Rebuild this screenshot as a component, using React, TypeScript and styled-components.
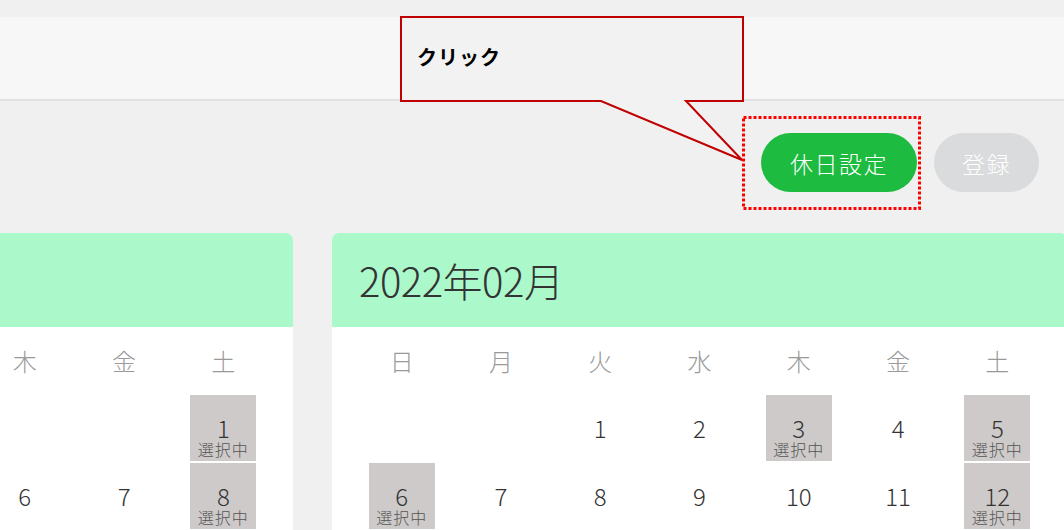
import React from 'react'
import styled, { createGlobalStyle } from 'styled-components'

const GlobalStyle = createGlobalStyle`
  html, body {
    margin: 0;
    padding: 0;
    background: #f0f0f0;
  }
  body {
    font-family: 'Noto Sans CJK JP', 'Noto Sans', sans-serif;
    overflow: hidden;
  }
`

type Month = {
  title: string
  firstWeekday: number
  days: number
  selected: number[]
}

const WEEKDAYS = ['日', '月', '火', '水', '木', '金', '土']

const MONTHS: Month[] = [
  { title: '2022年01月', firstWeekday: 6, days: 31, selected: [1, 8] },
  { title: '2022年02月', firstWeekday: 2, days: 28, selected: [3, 5, 6, 12] },
]

const buildCells = (month: Month) => {
  const cells: (number | null)[] = []
  for (let i = 0; i < month.firstWeekday; i++) cells.push(null)
  for (let d = 1; d <= month.days; d++) cells.push(d)
  return cells
}

const CalendarCard = (props: { month: Month }) => {
  const { month } = props
  return (
    <Card>
      <CardHeader>{month.title}</CardHeader>
      <WeekRow>
        {WEEKDAYS.map((w) => (
          <Weekday key={w}>{w}</Weekday>
        ))}
      </WeekRow>
      <DayGrid>
        {buildCells(month).map((day, index) => {
          const selected = day !== null && month.selected.includes(day)
          return (
            <DayCell key={index} $selected={selected}>
              {day !== null ? <DayNumber>{day}</DayNumber> : null}
              {selected ? <DayLabel>選択中</DayLabel> : null}
            </DayCell>
          )
        })}
      </DayGrid>
    </Card>
  )
}

const App = () => {
  return (
    <Page>
      <GlobalStyle />
      <TopBar />
      <Toolbar>
        <ActionButton $variant={'primary'}>休日設定</ActionButton>
        <ActionButton $variant={'disabled'}>登録</ActionButton>
      </Toolbar>
      <CalendarRow>
        {MONTHS.map((m) => (
          <CalendarCard key={m.title} month={m} />
        ))}
      </CalendarRow>

      <Callout>
        <svg width="346" height="146" viewBox="0 0 346 146">
          <path
            d="M1 1 H343 V85 H286 L342 144 L201 85 H1 Z"
            fill="#f2f2f2"
            stroke="#c00000"
            strokeWidth="2"
          />
        </svg>
        <CalloutText>クリック</CalloutText>
      </Callout>

      <HighlightFrame>
        <svg width="179" height="94" viewBox="0 0 179 94">
          <rect
            x="1.5"
            y="1.5"
            width="176"
            height="91"
            fill="none"
            stroke="#ff0000"
            strokeWidth="3"
            strokeDasharray="3 2"
          />
        </svg>
      </HighlightFrame>
    </Page>
  )
}

export default App

const Page = styled.div`
  position: relative;
  width: 1064px;
  height: 530px;
  overflow: hidden;
  display: flex;
  flex-direction: column;
  background: #f0f0f0;
`

const TopBar = styled.div`
  flex-shrink: 0;
  margin-top: 17px;
  height: 82px;
  background: #f7f7f7;
  border-bottom: 2px solid #e2e2e2;
`

const Toolbar = styled.div`
  flex-shrink: 0;
  display: flex;
  justify-content: flex-end;
  gap: 17px;
  padding: 32px 25px 0 0;
`

const ActionButton = styled.button<{ $variant: 'primary' | 'disabled' }>`
  height: 59px;
  border: none;
  border-radius: 30px;
  padding: ${(p) => (p.$variant === 'primary' ? '0 29px' : '0 28px')};
  background: ${(p) => (p.$variant === 'primary' ? '#1dbb3f' : '#d9dbdc')};
  color: #ffffff;
  font-family: 'Noto Sans CJK JP', 'Noto Sans', sans-serif;
  font-size: 23px;
  font-weight: 300;
  letter-spacing: 1.5px;
  cursor: pointer;
`

const CalendarRow = styled.div`
  flex-shrink: 0;
  display: flex;
  gap: 39px;
  margin-top: 41px;
  margin-left: -442px;
`

const Card = styled.div`
  flex-shrink: 0;
  width: 735px;
  height: 400px;
  background: #ffffff;
  border-radius: 7px 7px 0 0;
  overflow: hidden;
`

const CardHeader = styled.div`
  height: 94px;
  display: flex;
  align-items: center;
  padding-left: 27px;
  background: #abf8cb;
  color: #333333;
  font-size: 40px;
  font-weight: 200;
  letter-spacing: -0.5px;
`

const WeekRow = styled.div`
  display: grid;
  grid-template-columns: repeat(7, 1fr);
  padding: 0 20px;
  height: 68px;
`

const Weekday = styled.div`
  display: flex;
  align-items: center;
  justify-content: center;
  padding-bottom: 2px;
  font-size: 24px;
  font-weight: 200;
  color: #9a9a9a;
`

const DayGrid = styled.div`
  display: grid;
  grid-template-columns: repeat(7, 1fr);
  grid-auto-rows: 66px;
  row-gap: 2px;
  padding: 0 20px;
`

const DayCell = styled.div<{ $selected: boolean }>`
  justify-self: center;
  width: 66px;
  box-sizing: border-box;
  display: flex;
  flex-direction: column;
  align-items: center;
  padding-top: 21px;
  background: ${(p) => (p.$selected ? '#cdcac9' : 'transparent')};
`

const DayNumber = styled.div`
  font-size: 24px;
  line-height: 24px;
  font-weight: 200;
  color: #333333;
`

const DayLabel = styled.div`
  font-size: 16px;
  line-height: 18px;
  font-weight: 300;
  letter-spacing: 1px;
  color: #555555;
`

const Callout = styled.div`
  position: absolute;
  left: 400px;
  top: 16px;
  width: 346px;
  height: 146px;
  box-sizing: border-box;
  padding: 29px 0 0 17px;

  svg {
    position: absolute;
    left: 0;
    top: 0;
  }
`

const CalloutText = styled.div`
  position: relative;
  font-size: 20px;
  line-height: 24px;
  font-weight: 700;
  color: #000000;
  letter-spacing: 1px;
`

const HighlightFrame = styled.div`
  position: absolute;
  left: 742px;
  top: 116px;
  width: 179px;
  height: 94px;

  svg {
    display: block;
  }
`
